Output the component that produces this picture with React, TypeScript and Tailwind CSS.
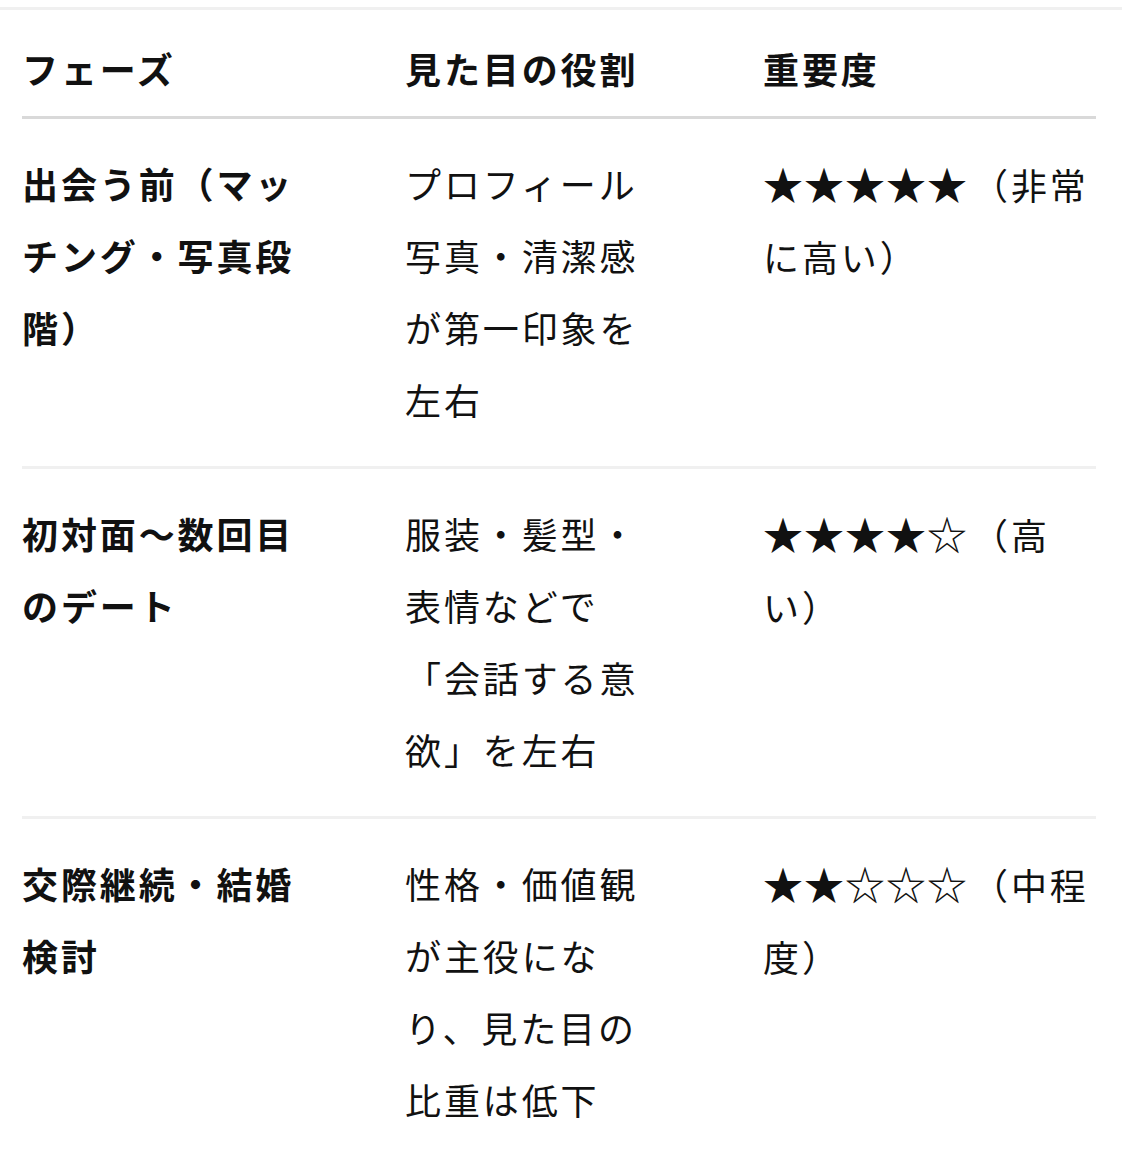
const rows = [
  {
    phase: "出会う前（マッチング・写真段階）",
    role: "プロフィール写真・清潔感が第一印象を左右",
    stars: "★★★★★",
    level: "（非常に高い）",
  },
  {
    phase: "初対面〜数回目のデート",
    role: "服装・髪型・表情などで「会話する意欲」を左右",
    stars: "★★★★☆",
    level: "（高い）",
  },
  {
    phase: "交際継続・結婚検討",
    role: "性格・価値観が主役になり、見た目の比重は低下",
    stars: "★★☆☆☆",
    level: "（中程度）",
  },
];

const font = {
  fontFamily: '"Noto Sans CJK JP", "Noto Sans", sans-serif',
};

export default function App() {
  return (
    <div className="min-h-[1156px] bg-white pt-[7px] text-[#111111]" style={font}>
      <div className="border-t-[3px] border-[#f0f0f0] px-[22px] pr-[26px]">
        <div className="grid grid-cols-[383px_358px_333px] border-b-[3px] border-[#d9d9d9] pt-[22px] pb-[12px] text-[36px] font-bold leading-[72px] tracking-[0.08em]">
          <div>フェーズ</div>
          <div>見た目の役割</div>
          <div>重要度</div>
        </div>
        {rows.map((r, i) => (
          <div
            key={i}
            className="grid grid-cols-[383px_358px_333px] border-b-[3px] border-[#f0f0f0] pt-[28px] pb-[31px] text-[36px] leading-[72px] tracking-[0.08em]"
          >
            <div className="pr-[90px] font-bold">{r.phase}</div>
            <div className="pr-[106px]">{r.role}</div>
            <div className="-mr-[10px]">
              <span className="text-[40px] tracking-[1px]">{r.stars}</span>
              <span className="ml-[4px]">{r.level}</span>
            </div>
          </div>
        ))}
      </div>
    </div>
  );
}
